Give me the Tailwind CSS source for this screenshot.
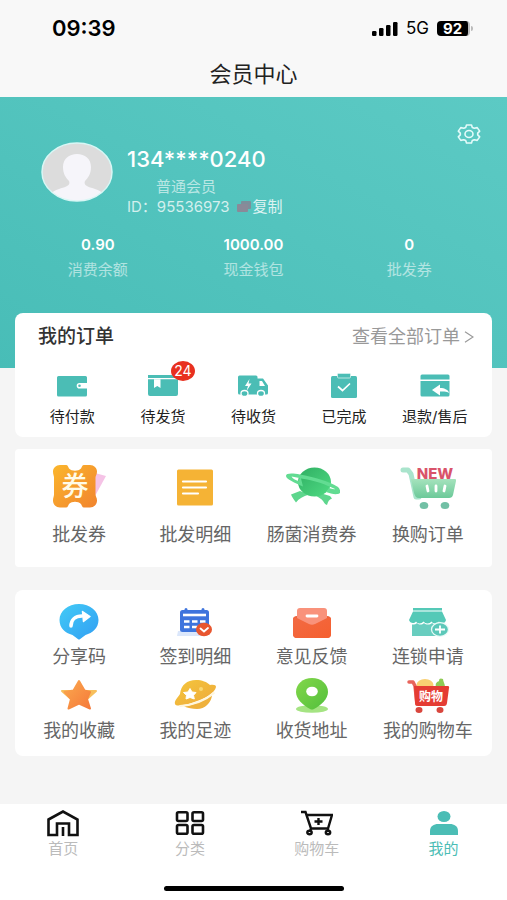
<!DOCTYPE html>
<html lang="zh-CN">
<head>
    <meta charset="UTF-8">
    <meta name="viewport" content="width=device-width, initial-scale=1.0">
    <title>会员中心</title>
    <script src="https://cdn.jsdelivr.net/npm/@tailwindcss/browser@4"></script>
</head>
<body class="bg-[#f5f5f5] text-[#333] font-[Inter,'Noto_Sans_CJK_SC',sans-serif] min-h-screen flex flex-col">

    <!-- Status bar + title -->
    <header class="bg-[#f8f8f8]">
        <div class="h-[52px] pt-[5px] pl-[52px] pr-[34px] flex items-center justify-between text-black">
            <span class="text-[22px] font-semibold">09:39</span>
            <div class="flex items-center gap-2">
                <svg class="w-[26px] h-[14px]" viewBox="0 0 26 14">
                    <rect x="0" y="9" width="4.5" height="5" rx="1.2"/>
                    <rect x="7" y="6" width="4.5" height="8" rx="1.2"/>
                    <rect x="14" y="3" width="4.5" height="11" rx="1.2"/>
                    <rect x="21" y="0" width="4.5" height="14" rx="1.2"/>
                </svg>
                <span class="text-[17px]">5G</span>
                <span class="flex items-center">
                    <span class="w-[33px] h-[15px] rounded bg-black border-r-2 border-[#bbb] text-white text-[15px] leading-[15px] font-bold text-center">92</span>
                    <span class="w-[2px] h-[5px] ml-px rounded-r bg-[#bbb]"></span>
                </span>
            </div>
        </div>
        <h1 class="h-[45px] leading-[45px] text-center text-[22px] text-[#222]">会员中心</h1>
    </header>

    <main class="flex-1">
        <!-- Profile -->
        <section class="bg-linear-to-tr from-[#48bdb7] to-[#5ccac4] pt-[27px] pb-[88px] text-white">
            <div class="flex items-start pl-[41px] pr-[26px]">
                <svg class="w-[72px] h-[60px] mt-[18px] shrink-0" viewBox="0 0 72 60">
                    <defs><clipPath id="face"><ellipse cx="36" cy="30" rx="35" ry="29"/></clipPath></defs>
                    <ellipse cx="36" cy="30" rx="35" ry="29" fill="#dcdcdc"/>
                    <g clip-path="url(#face)" fill="#f6f5fa">
                        <path d="M22 25c0-8 6-13 14-13s14 5 14 13c0 7-3 11-6 14-2 5 4 6 10 8 4 1 7 3 8 5v10H10V52c1-2 4-4 8-5 6-2 12-3 10-8-3-3-6-7-6-14z"/>
                    </g>
                    <ellipse cx="36" cy="30" rx="35" ry="29" fill="none" stroke="#d9f7f5" stroke-width="1.5"/>
                </svg>
                <div class="mt-[21px] ml-[14px]">
                    <p class="text-[22px] leading-7 font-medium">134****0240</p>
                    <p class="mt-1 pl-[29px] text-[15px] leading-5 text-white/60">普通会员</p>
                    <div class="flex items-center text-[15px] leading-[19px] text-white/75">
                        <span>ID：95536973</span>
                        <button class="ml-2 flex items-center text-white/80">
                            <svg class="w-[15px] h-3" viewBox="0 0 15 12">
                                <rect x="4" y="0" width="10" height="8" rx="1" fill="#7d8f9b"/>
                                <rect x="0" y="3" width="11" height="8" rx="1" fill="#8a8a98"/>
                            </svg>
                            复制
                        </button>
                    </div>
                </div>
                <button class="ml-auto" aria-label="设置">
                    <svg class="w-6 h-5" viewBox="0 0 24 20" fill="none" stroke="#e4fbfa" stroke-width="1.6" stroke-linejoin="round">
                        <path d="M9.5 1h5l.8 2.4 2 .9 2.9-.7 2.5 3.5-2 2v1.8l2 2-2.5 3.5-2.900-.7-2 .9-.8 2.400h-5l-.8-2.400-2-.9-2.900.7-2.500-3.500 2-2V9.100l-2-2 2.500-3.500 2.900.7 2-.9z"/>
                        <ellipse cx="12" cy="10" rx="4" ry="3.5"/>
                    </svg>
                </button>
            </div>
            <dl class="mt-[19px] px-5 grid grid-cols-3 text-center text-[15px] leading-5">
                <div class="flex flex-col-reverse gap-[5px]"><dt class="text-white/55">消费余额</dt><dd class="font-semibold">0.90</dd></div>
                <div class="flex flex-col-reverse gap-[5px]"><dt class="text-white/55">现金钱包</dt><dd class="font-semibold">1000.00</dd></div>
                <div class="flex flex-col-reverse gap-[5px]"><dt class="text-white/55">批发券</dt><dd class="font-semibold">0</dd></div>
            </dl>
        </section>

        <!-- Orders -->
        <section class="-mt-[55px] mx-[15px] relative bg-white rounded-lg pt-3 pb-[10px]">
            <div class="flex items-center justify-between pl-[23px] pr-[18px] leading-6">
                <h2 class="text-[19px] font-medium">我的订单</h2>
                <a href="#" class="flex items-center gap-1 text-lg leading-6 text-[#999]">
                    查看全部订单
                    <svg class="w-[10px] h-3" viewBox="0 0 10 12" fill="none" stroke="#999" stroke-width="1.2"><path d="M1 .8l8 5.2-8 5.2"/></svg>
                </a>
            </div>
            <div class="mt-6 px-3 grid grid-cols-5 text-[15px] leading-5 text-[#222]">
                <a href="#" class="flex flex-col items-center gap-2 whitespace-nowrap">
                    <svg class="w-8 h-[26px]" viewBox="0 0 32 26">
                        <path fill="#4bbdb5" d="M2.500 3h27A1.500 1.500 0 0 1 31 4.500V10h-7.500a2.800 2.800 0 0 0 0 5.600H31v6.400a1.500 1.500 0 0 1-1.500 1.500h-27A1.500 1.500 0 0 1 1 22V4.500A1.500 1.500 0 0 1 2.500 3z"/>
                        <circle cx="23.5" cy="12.8" r="1.3" fill="#4bbdb5"/>
                    </svg>
                    待付款
                </a>
                <a href="#" class="relative flex flex-col items-center gap-2 whitespace-nowrap">
                    <svg class="w-8 h-[26px]" viewBox="0 0 32 26">
                        <path fill="#4bbdb5" d="M1 2h30v3H1zM1 6.300h30V21a2 2 0 0 1-2 2H3a2 2 0 0 1-2-2z"/>
                        <path fill="#fff" d="M7 6.300h6.500V15l-3.200-2L7 15z"/>
                    </svg>
                    <span class="absolute -top-3 left-1/2 ml-2 w-6 h-5 rounded-[50%] bg-[#e8301f] text-white text-sm leading-5 text-center">24</span>
                    待发货
                </a>
                <a href="#" class="flex flex-col items-center gap-2 whitespace-nowrap">
                    <svg class="w-8 h-[26px]" viewBox="0 0 32 26">
                        <path fill="#4bbdb5" d="M2.500 2.500H19A1.500 1.500 0 0 1 20.500 4v1.500H26l5 7V20a1.500 1.500 0 0 1-1.500 1.500H2.500A1.500 1.500 0 0 1 1 20V4a1.500 1.500 0 0 1 1.500-1.500z"/>
                        <path fill="#fff" d="M12.500 6L8 13h3l-1.500 5 5-7.500h-3zM22.500 8H25l3 5h-5.500z"/>
                        <ellipse cx="7.5" cy="20.5" rx="3.5" ry="3" fill="#4bbdb5" stroke="#fff" stroke-width="1.3"/>
                        <ellipse cx="24" cy="20.5" rx="3.5" ry="3" fill="#4bbdb5" stroke="#fff" stroke-width="1.3"/>
                    </svg>
                    待收货
                </a>
                <a href="#" class="flex flex-col items-center gap-2 whitespace-nowrap">
                    <svg class="w-8 h-[26px]" viewBox="0 0 32 26">
                        <rect x="3" y="3" width="26" height="22" rx="1.5" fill="#4bbdb5"/>
                        <rect x="9.500" y="0.500" width="13" height="4.500" rx="1" fill="#4bbdb5" stroke="#d5f0ee" stroke-width=".8"/>
                        <path fill="none" stroke="#fff" stroke-width="1.700" d="M10 13.500l4.500 4L22 10.500"/>
                    </svg>
                    已完成
                </a>
                <a href="#" class="flex flex-col items-center gap-2 whitespace-nowrap">
                    <svg class="w-8 h-[26px]" viewBox="0 0 32 26">
                        <path fill="#4bbdb5" d="M3 1.500h26A1.500 1.500 0 0 1 30.500 3v3.500h-29V3A1.500 1.500 0 0 1 3 1.500zM1.500 8h29v14a1.500 1.500 0 0 1-1.500 1.500H3A1.500 1.500 0 0 1 1.500 22z"/>
                        <path fill="#fff" d="M13 17l8-5.500v3.500c5 0 8 2 9.500 5-3-1.500-6-1.800-9.500-1.500v4z"/>
                    </svg>
                    退款/售后
                </a>
            </div>
        </section>

        <!-- Wholesale -->
        <section class="mt-3 mx-[15px] bg-white rounded-sm pt-[14px] pb-5 px-[6px] grid grid-cols-4 text-lg leading-6 text-[#666]">
            <a href="#" class="flex flex-col items-center gap-3 whitespace-nowrap">
                <svg class="w-14 h-12" viewBox="0 0 56 48">
                    <defs><linearGradient id="coupon" x1="0" y1="0" x2="1" y2="1"><stop stop-color="#fbb62c"/><stop offset="1" stop-color="#f1842e"/></linearGradient></defs>
                    <path fill="#f5c3e6" d="M44 10l11 3-11 20z"/>
                    <path fill="url(#coupon)" d="M9 2h6c2 0 2 2 3 3.500 3 3 9 3 12 0C31 4 31 2 33 2h6c4 0 7 3 7 6.500 0 3-1.500 4-1.500 6v17c0 2 1.500 3 1.500 6 0 4-3 7-7 7h-6c-2 0-2-2-3-3.500-3-3-9-3-12 0-1 1.500-1 3.500-3 3.500H9c-4 0-7-3-7-7 0-3 1-4 1-6v-17c0-2-1-3-1-6C2 5 5 2 9 2z"/>
                    <text x="24" y="33" text-anchor="middle" font-size="27" font-weight="500" fill="#fffbe8">券</text>
                </svg>
                批发券
            </a>
            <a href="#" class="flex flex-col items-center gap-3 whitespace-nowrap">
                <svg class="w-14 h-12" viewBox="0 0 56 48">
                    <rect x="10" y="6.5" width="36" height="36" rx="1.5" fill="#f5b335"/>
                    <path stroke="#fff" stroke-width="2.2" stroke-linecap="round" d="M16 18.500h23M16 24.500h23M16 30.500h15"/>
                </svg>
                批发明细
            </a>
            <a href="#" class="flex flex-col items-center gap-3 whitespace-nowrap">
                <svg class="w-14 h-12" viewBox="0 0 56 48">
                    <defs><linearGradient id="planet" x1="0" y1="0" x2="1" y2="1"><stop stop-color="#2fae62"/><stop offset="1" stop-color="#4fdb83"/></linearGradient></defs>
                    <path fill="#5ed68d" d="M16 28l-9 3.500c1 3 3 5 5 8 3-4 7-6 13-8zM36 30l10 3 2 2.500c-3 1-4 3-5 6.500-3-1-3-4-6-6l-6-4z"/>
                    <ellipse cx="30.5" cy="19" rx="16.5" ry="14.5" fill="url(#planet)"/>
                    <path fill="#62dc92" fill-rule="evenodd" d="M2 13c0-3 6-3 14-1.500C30 14 44 18 54 24c3 3 3 7 0 7-4 .5-8-.5-12-2l3-4c3 1 5 1.500 6 1-8-4-21-9-34-10.500l2 8C11 20 2 16 2 13zM7.500 13.500c1 2 4 3.500 7 4.500l1-3z"/>
                </svg>
                肠菌消费券
            </a>
            <a href="#" class="flex flex-col items-center gap-3 whitespace-nowrap">
                <svg class="w-14 h-12" viewBox="0 0 56 48">
                    <defs><linearGradient id="cart" x1="0" y1="0" x2="0" y2="1"><stop stop-color="#a5e3bd"/><stop offset="1" stop-color="#6cc999"/></linearGradient></defs>
                    <path fill="none" stroke="#a9e4cc" stroke-width="5" stroke-linecap="round" stroke-linejoin="round" d="M3 7h5l3 4 5 23h3"/>
                    <path fill="url(#cart)" d="M11 16h44c1 0 1.500 1 1 2l-3 14c-.5 2-2 3-4 3H19c-3 0-4-2-5-5z"/>
                    <path stroke="#fff" stroke-width="2.8" stroke-linecap="round" d="M27 23l1 5M36 23v5M45 23l-1 5"/>
                    <ellipse cx="24" cy="42.5" rx="4.3" ry="3.5" fill="#72c0a5"/>
                    <ellipse cx="45" cy="42.5" rx="4.3" ry="3.5" fill="#72c0a5"/>
                    <text x="35" y="16" text-anchor="middle" font-size="15" font-weight="800" fill="#d9536a">NEW</text>
                </svg>
                换购订单
            </a>
        </section>

        <!-- Services -->
        <section class="mt-[23px] mb-12 mx-[15px] bg-white rounded-lg pt-[11px] pb-[13px] px-[6px] grid grid-cols-4 gap-y-[6px] text-lg leading-6 text-[#666]">
            <a href="#" class="flex flex-col items-center gap-1 whitespace-nowrap">
                <svg class="w-11 h-10" viewBox="0 0 44 40">
                    <defs><linearGradient id="share" x1="0" y1="0" x2="1" y2="1"><stop stop-color="#42cbf6"/><stop offset="1" stop-color="#329ef3"/></linearGradient></defs>
                    <path fill="url(#share)" d="M22 3c11 0 19.500 7 19.500 16 0 8-6 13-13 15l-6 4.500h-1l-6-4.500C8 32 2.500 27 2.500 19 2.500 10 11 3 22 3z"/>
                    <path fill="none" stroke="#fff" stroke-width="3.5" stroke-linecap="round" d="M14 25c0-6 4-10 11-10"/>
                    <path fill="#fff" stroke="#fff" stroke-width="1.5" stroke-linejoin="round" d="M25.500 10.500l7.500 5-6.500 5z"/>
                </svg>
                分享码
            </a>
            <a href="#" class="flex flex-col items-center gap-1 whitespace-nowrap">
                <svg class="w-11 h-10" viewBox="0 0 44 40">
                    <path fill="#dbe7fb" d="M5 30h28v5H4z"/>
                    <rect x="7" y="9" width="29" height="22" rx="2.5" fill="#3e74dd"/>
                    <path stroke="#3e74dd" stroke-width="3" stroke-linecap="round" d="M13 8.500v3M30 8.500v3"/>
                    <path stroke="#fff" stroke-width="2.6" d="M10 14h23"/>
                    <path stroke="#fff" stroke-width="2.6" stroke-dasharray="5.5 2.5" d="M11 20.500h22M11 26h14"/>
                    <ellipse cx="31" cy="28.5" rx="8" ry="6.8" fill="#e8562f"/>
                    <path fill="none" stroke="#fff" stroke-width="1.8" stroke-linecap="round" d="M27.500 27.500l3.500 3 4-3.500"/>
                </svg>
                签到明细
            </a>
            <a href="#" class="flex flex-col items-center gap-1 whitespace-nowrap">
                <svg class="w-11 h-10" viewBox="0 0 44 40">
                    <defs><linearGradient id="mail" x1="0" y1="0" x2="1" y2="1"><stop stop-color="#f26a43"/><stop offset="1" stop-color="#f55f2f"/></linearGradient></defs>
                    <rect x="3" y="15" width="38" height="22" rx="4" fill="#ee5f38"/>
                    <path fill="#f9927b" d="M10 7h24c2 0 3 1 3 3v9l-15 9L7 19v-9c0-2 1-3 3-3z"/>
                    <path fill="url(#mail)" d="M3 18c0-2 2-2 4-1l12 6c2 1 4 1 6 0l12-6c2-1 4-1 4 1v15c0 3-2 4-4 4H7c-3 0-4-2-4-4z"/>
                    <path stroke="#fff" stroke-width="2.8" stroke-linecap="round" d="M17 15h10"/>
                </svg>
                意见反馈
            </a>
            <a href="#" class="flex flex-col items-center gap-1 whitespace-nowrap">
                <svg class="w-11 h-10" viewBox="0 0 44 40">
                    <path fill="#55c9b7" d="M7 7h29v2.500H7zM7 10.500h29l4 8.500c-1 4-5 4-7 1.500-2 2.500-6 2.500-7.500 0-2 2.500-6 2.500-8 0-2 2.500-6 2.500-7.500 0-2 2.500-6 2-7-1.500z"/>
                    <path fill="#68cdbf" d="M6 23.500c3 0 4-.5 5-1.500 2 2 5 2 7 0 2 2 6 2 8 0 2 2 7 2 10 1v12H6z"/>
                    <ellipse cx="34" cy="28.5" rx="8.5" ry="6.8" fill="#5cc8b9" stroke="#e9faf7" stroke-width="1.3"/>
                    <path stroke="#fff" stroke-width="1.8" d="M29 28.500h10M34 24.500v8"/>
                </svg>
                连锁申请
            </a>
            <a href="#" class="flex flex-col items-center gap-1 whitespace-nowrap">
                <svg class="w-11 h-10" viewBox="0 0 44 40">
                    <defs><linearGradient id="star" x1="0" y1="0" x2="1" y2="1"><stop stop-color="#fba94f"/><stop offset="1" stop-color="#f57a3a"/></linearGradient></defs>
                    <path fill="#f7bf5c" stroke="#f7bf5c" stroke-width="2" stroke-linejoin="round" d="M5 16h34l-9 8H14z"/>
                    <path fill="url(#star)" stroke="url(#star)" stroke-width="2" stroke-linejoin="round" d="M22 6l5.500 9.500L33 17l-3 7 3 9.500-11-5-10.500 5L14 24l-6.500-7 9-1.500z"/>
                </svg>
                我的收藏
            </a>
            <a href="#" class="flex flex-col items-center gap-1 whitespace-nowrap">
                <svg class="w-11 h-10" viewBox="0 0 44 40">
                    <defs><linearGradient id="track" x1="0" y1="0" x2="1" y2="1"><stop stop-color="#f4c63c"/><stop offset="1" stop-color="#eea93b"/></linearGradient></defs>
                    <path fill="url(#track)" d="M23 5c6 0 11 2 14 5 4-.5 6 0 6 2-1 6-12 12-23 15.500C12 30 3 32 2 29c-1-3 3-7 5-10C8 10 14 5 23 5z"/>
                    <path fill="#efb13c" d="M11 31.500c11-2 20-6 28-11C38 28 32 34 24 34c-5 0-9-1-13-2.500z"/>
                    <path fill="none" stroke="#fff6dc" stroke-width="1.8" stroke-linecap="round" d="M7 31c13-1 26-6 34-13"/>
                    <path fill="#fff" stroke="#fff" stroke-linejoin="round" d="M17 13.500l2 3.500 4 .5-2.500 2.800.8 3.700-4.300-1.500-4 1.500.5-3.700-3-2.800 4.500-.5z"/>
                    <circle cx="28" cy="14" r="2" fill="#f9d873"/>
                </svg>
                我的足迹
            </a>
            <a href="#" class="flex flex-col items-center gap-1 whitespace-nowrap">
                <svg class="w-11 h-10" viewBox="0 0 44 40">
                    <defs><linearGradient id="pin" x1="0" y1="0" x2="1" y2="1"><stop stop-color="#83d74a"/><stop offset="1" stop-color="#52bf3c"/></linearGradient></defs>
                    <ellipse cx="22" cy="34" rx="16" ry="3.8" fill="#a5e483"/>
                    <path fill="url(#pin)" d="M22 3c9 0 16 6 16 14 0 7-7 13-14 17-1.500.8-2.500.8-4 0C13 30 6 24 6 17 6 9 13 3 22 3z"/>
                    <ellipse cx="22" cy="16.5" rx="5.8" ry="4.8" fill="#fff"/>
                </svg>
                收货地址
            </a>
            <a href="#" class="flex flex-col items-center gap-1 whitespace-nowrap">
                <svg class="w-11 h-10" viewBox="0 0 44 40">
                    <ellipse cx="19" cy="10" rx="8.5" ry="6" fill="#f9cf72"/>
                    <path fill="#8fca55" d="M30 12c-1-4 1-5 3-6 0-3 2-3 4-2 0 2 2 5 2 8z"/>
                    <path fill="none" stroke="#e8645b" stroke-width="3.5" stroke-linecap="round" stroke-linejoin="round" d="M3 7h4l2 4 2 18"/>
                    <path fill="#e53c33" d="M8 11h34c1 0 1.500 1 1 2l-2 15c-.3 2-1 3-3 3H12c-2 0-3-1-3-3z"/>
                    <ellipse cx="13" cy="35" rx="3.5" ry="3" fill="#d9463d"/>
                    <ellipse cx="34" cy="35" rx="3.5" ry="3" fill="#d9463d"/>
                    <text x="25" y="26" text-anchor="middle" font-size="12" font-weight="700" fill="#fff">购物</text>
                </svg>
                我的购物车
            </a>
        </section>
    </main>

    <!-- Tab bar -->
    <footer class="bg-white pt-[5px] pb-[9px]">
        <nav class="grid grid-cols-4 text-[15px] leading-5 text-[#bbb]">
            <a href="#" class="flex flex-col items-center gap-[2px]">
                <svg class="w-8 h-7" viewBox="0 0 32 28" fill="none" stroke="#111" stroke-width="2.6">
                    <path d="M1.500 10.500L16 2.500l14.500 8V26H22V14.500H10V26H1.500zM16 18v9"/>
                </svg>
                首页
            </a>
            <a href="#" class="flex flex-col items-center gap-[2px]">
                <svg class="w-8 h-7" viewBox="0 0 32 28" fill="none" stroke="#111" stroke-width="2.6">
                    <rect x="3" y="3.2" width="10.5" height="8.8" rx="1.5"/>
                    <rect x="18.5" y="3.2" width="10.5" height="8.8" rx="1.5"/>
                    <rect x="3" y="16" width="10.5" height="8.8" rx="1.5"/>
                    <rect x="18.5" y="16" width="10.5" height="8.8" rx="1.5"/>
                </svg>
                分类
            </a>
            <a href="#" class="flex flex-col items-center gap-[2px]">
                <svg class="w-8 h-7" viewBox="0 0 32 28" fill="none" stroke="#111" stroke-width="2.4">
                    <path d="M0 3h4.500L10 19.500h17L31 6H6M17.500 9v7M13.500 12.500h8M10 19.500l-1 3M27 19.500v3"/>
                    <ellipse cx="8.5" cy="23.5" rx="2.2" ry="1.7"/>
                    <ellipse cx="27" cy="23.5" rx="2.2" ry="1.7"/>
                </svg>
                购物车
            </a>
            <a href="#" aria-current="page" class="flex flex-col items-center gap-[2px] text-[#4bbdb5]">
                <svg class="w-8 h-7" viewBox="0 0 32 28" fill="#4bbdb5">
                    <ellipse cx="16" cy="7.5" rx="6.5" ry="5.5"/>
                    <path d="M2 26v-4c0-5 4-7 8-7h12c4 0 8 2 8 7v4z"/>
                </svg>
                我的
            </a>
        </nav>
        <div class="mt-[27px] mx-auto w-[180px] h-[5px] rounded-full bg-black"></div>
    </footer>

</body>
</html>
